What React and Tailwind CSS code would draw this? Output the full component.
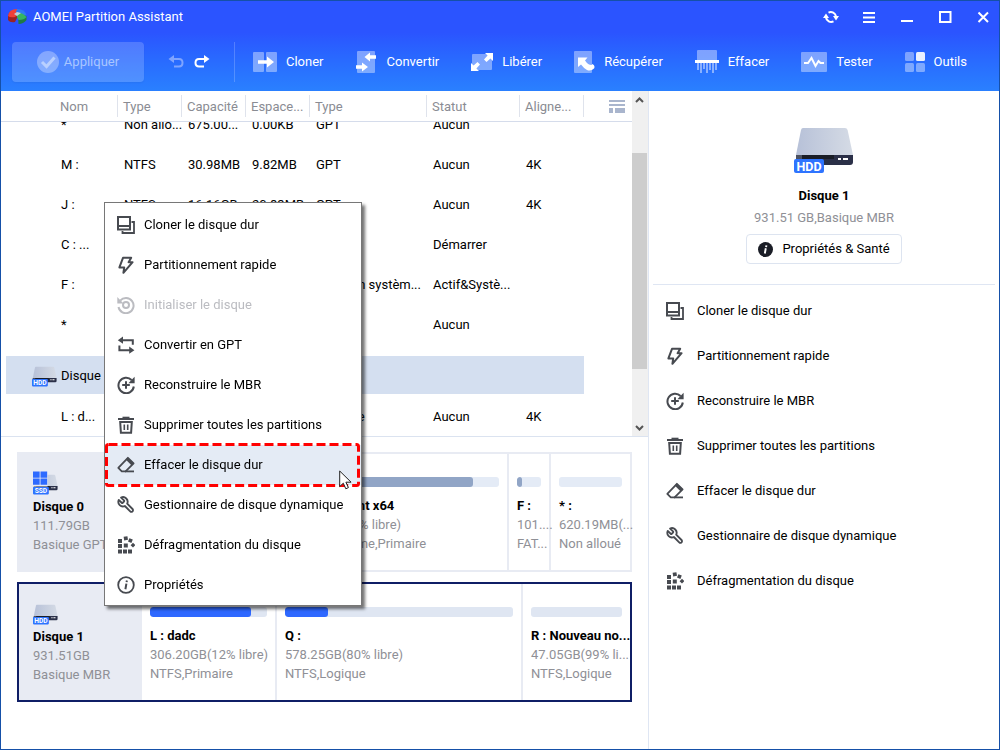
import React, { useEffect, useRef, useState } from 'react';

const columns = [
  { key: 'nom', label: 'Nom' },
  { key: 'fs', label: 'Type' },
  { key: 'capacite', label: 'Capacité' },
  { key: 'espace', label: 'Espace...' },
  { key: 'type', label: 'Type' },
  { key: 'statut', label: 'Statut' },
  { key: 'align', label: 'Aligne...' },
];

const rows = [
  { nom: '*', fs: 'Non allo...', capacite: '675.00...', espace: '0.00KB', type: 'GPT', statut: 'Aucun', align: '' },
  { nom: 'M :', fs: 'NTFS', capacite: '30.98MB', espace: '9.82MB', type: 'GPT', statut: 'Aucun', align: '4K' },
  { nom: 'J :', fs: 'NTFS', capacite: '16.16GB', espace: '20.83MB', type: 'GPT', statut: 'Aucun', align: '4K' },
  { nom: 'C : ...', fs: '', capacite: '', espace: '', type: '', statut: 'Démarrer', align: '' },
  { nom: 'F :', fs: '', capacite: '', espace: '', type: 'Partition systèm...', statut: 'Actif&Systè...', align: '' },
  { nom: '*', fs: '', capacite: '', espace: '', type: '', statut: 'Aucun', align: '' },
  { disk: true, nom: 'Disque 1' },
  { nom: 'L : d...', fs: '', capacite: '', espace: '', type: 'Primaire', statut: 'Aucun', align: '4K' },
];

const disks = [
  {
    name: 'Disque 0',
    size: '111.79GB',
    kind: 'Basique GPT',
    ssd: true,
    grid: 'grid-cols-[123px_minmax(0,133fr)_minmax(0,234fr)_minmax(0,42fr)_minmax(0,79fr)]',
    parts: [
      { name: '', info: '', fs: '', used: 40 },
      { name: 'C : Windows nt x64', info: '110.59GB(46% libre)', fs: 'FAT32, Système,Primaire', used: 88 },
      { name: 'F :', info: '101....', fs: 'FAT...', used: 22 },
      { name: '* :', info: '620.19MB(...', fs: 'Non alloué', used: 0 },
    ],
  },
  {
    name: 'Disque 1',
    size: '931.51GB',
    kind: 'Basique MBR',
    selected: true,
    grid: 'grid-cols-[123px_minmax(0,135fr)_minmax(0,246fr)_minmax(0,107fr)]',
    parts: [
      { name: 'L : dadc', info: '306.20GB(12% libre)', fs: 'NTFS,Primaire', used: 86 },
      { name: 'Q :', info: '578.25GB(80% libre)', fs: 'NTFS,Logique', used: 19 },
      { name: 'R : Nouveau no...', info: '47.05GB(99% li...', fs: 'NTFS,Logique', used: 0 },
    ],
  },
];

const menuItems = [
  { icon: 'clone', label: 'Cloner le disque dur' },
  { icon: 'bolt', label: 'Partitionnement rapide' },
  { icon: 'init', label: 'Initialiser le disque', disabled: true },
  { icon: 'convert', label: 'Convertir en GPT' },
  { icon: 'rebuild', label: 'Reconstruire le MBR' },
  { icon: 'trash', label: 'Supprimer toutes les partitions' },
  { icon: 'eraser', label: 'Effacer le disque dur', active: true },
  { icon: 'wrench', label: 'Gestionnaire de disque dynamique' },
  { icon: 'defrag', label: 'Défragmentation du disque' },
  { icon: 'info', label: 'Propriétés' },
];

const sideItems = menuItems.filter((m) => !['init', 'convert', 'info'].includes(m.icon));

const glyphs = {
  clone: (
    <g fill="none" stroke="currentColor" strokeWidth="2">
      <path d="M1 1h12v12.5H1zM1 10h12" />
      <path d="M14.5 6H17v11H5.5V15" strokeWidth="1.8" />
    </g>
  ),
  bolt: (
    <path d="M6 1.8h8.2L11.600 6.200h4L6.400 16.800l.8-5.400H2.400z" fill="none" stroke="currentColor" strokeWidth="2" strokeLinejoin="round" />
  ),
  init: (
    <g fill="none" stroke="currentColor" strokeWidth="2">
      <path d="M3.2 4.6A7.6 7.6 0 1 1 1.5 11" />
      <circle cx="9" cy="9" r="3" />
      <path d="M.3 1v6.4h6.2z" fill="currentColor" stroke="none" />
    </g>
  ),
  convert: (
    <g fill="none" stroke="currentColor" strokeWidth="2">
      <path d="M4 4.2h11.8v4.6M14 14.2H2.4V9.6" />
      <path d="M6 .6v7.2L.8 4.2zM12.2 10.6v7.2l5.2-3.6z" fill="currentColor" stroke="none" />
    </g>
  ),
  rebuild: (
    <g fill="none" stroke="currentColor" strokeWidth="2">
      <path d="M14.6 4A7.7 7.7 0 1 0 16.8 10.5" />
      <path d="M9 5.2v7.6M5.2 9h7.6" />
      <path d="M17.6.8v6.4h-6.2z" fill="currentColor" stroke="none" />
    </g>
  ),
  trash: (
    <g fill="none" stroke="currentColor" strokeWidth="2">
      <path d="M1 3h16" />
      <path d="M5.5 1.4h7" strokeWidth="1.4" />
      <path d="M3.2 6h11.6l-.7 10.8H3.9z" />
      <path d="M7.3 8.5v5.6M10.7 8.5v5.6" strokeWidth="1.6" />
    </g>
  ),
  eraser: (
    <g fill="none" stroke="currentColor" strokeWidth="1.8" strokeLinejoin="round">
      <path d="M10.9 1.8l5.7 5.6-8 8H4.8l-3.5-3.5z" />
      <path d="M8 15.4h9" />
      <path d="M10.9 1.4l6 6-2.2 2.2-6-6z" fill="currentColor" stroke="none" />
    </g>
  ),
  wrench: (
    <path
      transform="matrix(-.77 0 0 .77 18.3 -.4)"
      d="M14.7 6.3a1 1 0 0 0 0 1.4l1.6 1.6a1 1 0 0 0 1.4 0l3.77-3.77a6 6 0 0 1-7.94 7.94l-6.91 6.91a2.12 2.12 0 0 1-3-3l6.91-6.91a6 6 0 0 1 7.94-7.94l-3.76 3.76z"
      fill="none"
      stroke="currentColor"
      strokeWidth="2.4"
      strokeLinejoin="round"
    />
  ),
  defrag: (
    <g fill="currentColor">
      <path d="M1 3h4v4H1zM1 8h4v4H1zM1 13.4h4v4H1zM6 13.4h4v4H6zM11 13.4h4v4h-4zM6.8 7.6h4v4h-4z" />
      <path d="M6.6.8l3.8-.6.6 3.6-3.8.6zM12.4 2.2l3.4 1.4-1.4 3.4-3.4-1.4zM16 6.8l2.4 2.4-2.4 2.4-2.4-2.4z" />
    </g>
  ),
  info: (
    <g fill="none" stroke="currentColor" strokeWidth="1.8">
      <circle cx="9" cy="9" r="7.8" />
      <path d="M9.4 7.6l-1 5.6M9.9 4.5l-.3 1.7" strokeWidth="2" />
    </g>
  ),
};

const Icon = ({ name }) => (
  <svg className="h-[18px] w-[18px] shrink-0" viewBox="0 0 18 18" aria-hidden="true">
    {glyphs[name]}
  </svg>
);

const DriveIcon = ({ className, label = 'HDD', windows, small }) => (
  <svg className={className} viewBox="0 0 60 46" aria-hidden="true">
    <defs>
      <linearGradient id="drive" x1="0" y1="0" x2="1" y2="0">
        <stop offset="0" stopColor="#b7c1d8" />
        <stop offset="1" stopColor="#d5dbe5" />
      </linearGradient>
    </defs>
    <path d="M9 1h42q2 0 2.600 2L59 28H2L7 3q.5-2 2-2z" fill="url(#drive)" />
    <path d="M2 28h57v7q0 3-3 3H5q-3 0-3-3z" fill="#2b3048" />
    <path d="M2 28h6v4H2z" fill="#4c5160" />
    <path d="M8 28h32v4H8z" fill="#1a1d26" />
    <path d="M44 31h3v2h-3zM49 31h5v2h-5z" fill="#fff" />
    {windows && (
      <>
        <path d="M-1-8h36v37H-1z" fill="#e8ebf3" />
        <path d="M0-7h16v15H0zM18-7h16v15H18zM0 10h16v15H0zM18 10h16v15H18z" fill="#2e6bff" />
      </>
    )}
    {small ? (
      <rect x="0" y="30" width="38" height="18" rx="2" fill="#2e74ff" />
    ) : (
      <rect x="0" y="32" width="30" height="14" rx="2" fill="#2e74ff" />
    )}
    <text x={small ? 19 : 15} y={small ? 45 : 43.5} textAnchor="middle" fontSize={small ? 16 : 12.5} fontWeight="700" fill="#fff">
      {label}
    </text>
  </svg>
);

const Logo = () => (
  <svg className="h-[16px] w-[19px]" viewBox="0 0 19 16" aria-hidden="true">
    <path d="M9 1Q1 1 0 7v4q2 3 7 2l3-6z" fill="#9c2323" />
    <path d="M9 0Q1 0 0 7q2 2 7 1l3-3z" fill="#f04038" />
    <path d="M9 0q8 0 9.500 6L11 6 8 3z" fill="#2f7bf0" />
    <path d="M10 6l8.500 1v4q-3 4-8 4z" fill="#1f7a45" />
    <path d="M8 4q6-1 10.500 4-2 3-8 3L9 8z" fill="#36b560" />
    <path d="M6 5l3 2 4-3-4-1z" fill="#c4cdd8" />
  </svg>
);

const toolIcons = {
  cloner: (
    <svg className="h-6 w-6" viewBox="0 0 24 24" aria-hidden="true">
      <path d="M1 2h9q1 0 1 1v18q0 1-1 1H1q-1 0-1-1V3q0-1 1-1zM14 2h9q1 0 1 1v18q0 1-1 1h-9q-1 0-1-1V3q0-1 1-1z" fill="#fff" fillOpacity=".4" />
      <path d="M5 10.300h9V6.500l7 5.500-7 5.500v-3.800H5z" fill="#fff" />
    </svg>
  ),
  convertir: (
    <svg className="h-6 w-[22px]" viewBox="0 0 22 24" aria-hidden="true">
      <rect x="1" y="1" width="18" height="22" rx="1" fill="#fff" fillOpacity=".4" />
      <path d="M14 2.500v2.700h6v3.600h-6v2.700L8.500 7zM6 12.500v2.700H0v3.600h6v2.700l6-4.500z" fill="#fff" />
    </svg>
  ),
  liberer: (
    <svg className="h-6 w-[22px]" viewBox="0 0 22 24" aria-hidden="true">
      <rect x="1" y="4" width="20" height="16" rx="1" fill="#fff" fillOpacity=".4" />
      <path d="M14 3h8v8l-2.600-2.600L15.500 12 13 9.500l3.600-3.900zM8 21H0v-8l2.600 2.600L6.500 12 9 14.500l-3.600 3.900z" fill="#fff" />
    </svg>
  ),
  recuperer: (
    <svg className="h-6 w-[21px]" viewBox="0 0 21 24" aria-hidden="true">
      <rect x="0" y="1" width="18" height="22" rx="1" fill="#fff" fillOpacity=".4" />
      <path d="M4 7.500h9.500L11 10.500q3 4.500 6.500 4.500l1-1q3 1.500 1.500 4.500-3 3-7 1.500-3-1.500-6-5.500L4 17z" fill="#fff" />
    </svg>
  ),
  effacer: (
    <svg className="h-6 w-6" viewBox="0 0 24 24" aria-hidden="true">
      <path d="M3 0h18q1 0 1 1v9H2V1q0-1 1-1z" fill="#fff" fillOpacity=".4" />
      <path d="M0 10h24v3H0z" fill="#fff" />
      <path d="M3 13v7M6 13v10M9 13v6M12 13v10M15 13v7M18 13v10M21 13v7" stroke="#fff" strokeOpacity=".45" strokeWidth="2" />
    </svg>
  ),
  tester: (
    <svg className="h-6 w-[26px]" viewBox="0 0 26 24" aria-hidden="true">
      <rect y="2" width="26" height="20" rx="1" fill="#fff" fillOpacity=".4" />
      <path d="M3 13h4l3.500-5 4 8 3-5 2 2H23" fill="none" stroke="#fff" strokeWidth="2" />
    </svg>
  ),
  outils: (
    <svg className="h-6 w-[20px]" viewBox="0 0 20 24" aria-hidden="true">
      <g fill="#fff" fillOpacity=".4">
        <rect y="2" width="9" height="9" rx="1.500" />
        <rect y="13" width="9" height="9" rx="1.500" />
        <rect x="11" y="13" width="9" height="9" rx="1.500" />
      </g>
      <rect x="11" y="2" width="9" height="9" rx="1.500" fill="#fff" fillOpacity=".9" />
    </svg>
  ),
};

const tools = [
  { id: 'cloner', label: 'Cloner' },
  { id: 'convertir', label: 'Convertir' },
  { id: 'liberer', label: 'Libérer' },
  { id: 'recuperer', label: 'Récupérer' },
  { id: 'effacer', label: 'Effacer' },
  { id: 'tester', label: 'Tester' },
  { id: 'outils', label: 'Outils' },
];

const windowControls = [
  { label: 'Actualiser', d: 'M5.500 3.600A5.200 5.200 0 0 1 13 7.500M10.500 12.400A5.200 5.200 0 0 1 3 8.500', fill: 'M0 9l3-4.500L6 9zM10 7h6l-3 4.500z' },
  { label: 'Menu', d: 'M2 4h12M2 8.500h12M2 13h12' },
  { label: 'Réduire', d: 'M2 12h12' },
  { label: 'Agrandir', d: 'M3 3h10.500v10H3z' },
  { label: 'Fermer', d: 'M3.500 3.500l9.500 9.500M13 3.500L3.500 13' },
];

const Header = () => (
  <header className="bg-linear-to-b from-[#2b54ff] from-35% to-[#2a80ff] text-white">
    <div className="flex h-8 items-center justify-between pr-2 pl-[7px]">
      <div className="flex items-center gap-[6px]">
        <Logo />
        <h1>AOMEI Partition Assistant</h1>
      </div>
      <div className="flex gap-[22px]">
        {windowControls.map((c) => (
          <button key={c.label} type="button" aria-label={c.label} className="h-4 w-4">
            <svg viewBox="0 0 16 16" fill="none" stroke="#fff" strokeWidth="2">
              <path d={c.d} />
              {c.fill && <path d={c.fill} fill="#fff" stroke="none" />}
            </svg>
          </button>
        ))}
      </div>
    </div>
    <div className="flex h-[58px] items-center pr-8 pl-[11px]">
      <button type="button" className="flex h-10 w-[132px] items-center justify-center gap-[5px] rounded bg-white/18 text-[#a9c6ff] shadow-xs">
        <svg className="h-[22px] w-[22px]" viewBox="0 0 22 22" aria-hidden="true">
          <circle cx="11" cy="11" r="11" fill="#fff" fillOpacity=".3" />
          <path d="M5 11l4.500 4.500L17.500 6.500" fill="none" stroke="#b9d0ff" strokeWidth="3" />
        </svg>
        Appliquer
      </button>
      <div className="flex gap-[10px] pl-6">
        <button type="button" aria-label="Annuler" className="h-4 w-4">
          <svg viewBox="0 0 16 16" fill="none" stroke="#7fa4ff" strokeWidth="2">
            <path d="M4 5h7q3.500 0 3.500 3.700T11 12.500H6" />
            <path d="M6 1v8L.5 5z" fill="#7fa4ff" stroke="none" />
          </svg>
        </button>
        <button type="button" aria-label="Rétablir" className="h-4 w-4">
          <svg viewBox="0 0 16 16" fill="none" stroke="#fff" strokeWidth="2">
            <path d="M12 5H5Q1.500 5 1.500 8.700T5 12.500h5" />
            <path d="M10 1v8l5.500-4z" fill="#fff" stroke="none" />
          </svg>
        </button>
      </div>
      <div className="ml-6 h-10 border-l border-white/20" />
      <nav className="flex flex-1 items-center justify-between pl-[18px]">
        {tools.map((t) => (
          <button key={t.id} type="button" className="flex items-center gap-[9px]">
            {toolIcons[t.id]}
            {t.label}
          </button>
        ))}
      </nav>
    </div>
  </header>
);

const PartitionTable = () => {
  const scroller = useRef(null);

  useEffect(() => {
    scroller.current.scrollTop = 17;
  }, []);

  return (
    <section className="flex h-[346px] border-b border-[#dbe3f0]">
      <div ref={scroller} className="min-w-0 flex-1 overflow-hidden">
        <table className="w-full table-fixed border-separate border-spacing-0 text-left">
          <colgroup>
            <col className="w-[5px]" />
            <col className="w-[112px]" />
            <col className="w-[64px]" />
            <col className="w-[64px]" />
            <col className="w-[64px]" />
            <col className="w-[117px]" />
            <col className="w-[93px]" />
            <col className="w-[64px]" />
            <col />
          </colgroup>
          <thead className="sticky top-0 z-10 bg-white text-[#8a8c93]">
            <tr>
              <th className="border-b border-[#d5dceb]" />
              {columns.map((c) => (
                <th key={c.key} className="h-[31px] border-b border-[#d5dceb] p-0 font-normal">
                  <div className={`h-[22px] border-r border-[#dfe3ec] leading-6 ${c.key === 'nom' ? 'pl-[54px]' : 'pl-[5px]'}`}>
                    {c.label}
                  </div>
                </th>
              ))}
              <th className="border-b border-[#d5dceb] p-0 pl-[25px]">
                <button type="button" aria-label="Colonnes" className="block h-[13px] w-4">
                  <svg viewBox="0 0 16 13" fill="#a9b5cd">
                    <path d="M0 0h16v2H0zM0 4h16v2H0zM0 8h4v5H0zM6 8h10v5H6z" />
                  </svg>
                </button>
              </th>
            </tr>
          </thead>
          <tbody>
            {rows.map((r, i) =>
              r.disk ? (
                <React.Fragment key={i}>
                  <tr><td className="h-[11px] p-0" /></tr>
                  <tr>
                    <td className="p-0" />
                    <td colSpan={7} className="h-[38px] bg-[#d4dff0] p-0">
                      <div className="flex items-center gap-1 pt-[2px] pl-[26px]">
                        <DriveIcon small className="h-5 w-[25px] overflow-visible" />
                        {r.nom}
                      </div>
                    </td>
                    <td className="p-0" />
                  </tr>
                  <tr><td className="h-[3px] p-0" /></tr>
                </React.Fragment>
              ) : (
                <tr key={i}>
                  <td className="p-0" />
                  {columns.map((c) => (
                    <td
                      key={c.key}
                      className={`h-10 overflow-hidden p-0 whitespace-nowrap ${c.key === 'nom' ? 'pl-[55px]' : 'pl-[6px]'}`}
                    >
                      {r[c.key]}
                    </td>
                  ))}
                  <td className="p-0" />
                </tr>
              )
            )}
          </tbody>
        </table>
      </div>
      <div className="flex w-4 flex-col bg-[#f0f0f0] text-[#555]">
        <svg className="h-[17px] w-4" viewBox="0 0 16 17" fill="none" stroke="currentColor" strokeWidth="2">
          <path d="M4 11l3.500-3.500L11 11" />
        </svg>
        <div className="mt-[45px] h-[216px] w-[15px] bg-[#cdcdcd]" />
        <svg className="mt-auto h-[17px] w-4" viewBox="0 0 16 17" fill="none" stroke="currentColor" strokeWidth="2">
          <path d="M4 7l3.500 3.500L11 7" />
        </svg>
      </div>
    </section>
  );
};

const DiskCard = ({ disk }) => (
  <div className={`grid h-[120px] border-2 leading-[19px] ${disk.grid} ${disk.selected ? 'border-[#0f1e66]' : 'border-[#e8ebf3]'}`}>
    <div className="bg-[#e8ebf3] pt-5 pl-[14px] text-[#8f9096]">
      <DriveIcon small className="h-5 w-[25px] overflow-visible" label={disk.ssd ? 'SSD' : 'HDD'} windows={disk.ssd} />
      <p className="pt-[3px] font-bold text-black">{disk.name}</p>
      <p>{disk.size}</p>
      <p className="whitespace-nowrap">{disk.kind}</p>
    </div>
    {disk.parts.map((p) => (
      <div key={p.name} className="border-r-2 border-[#e8ebf3] pt-[23px] whitespace-nowrap text-[#8f9096] last:border-r-0">
        <div className={`mx-2 h-[10px] overflow-hidden rounded-[3px] ${disk.selected ? 'bg-[#dfe6f2]' : 'bg-[#e4ebf6]'}`}>
          <div
            className={`h-full rounded-[3px] ${disk.selected ? 'bg-[#2e68ff]' : 'bg-[#91a5c6]'}`}
            style={{ width: `${p.used}%` }}
          />
        </div>
        <div className="pt-[9px] pl-2">
          <p className="font-bold text-black">{p.name}</p>
          <p>{p.info}</p>
          <p>{p.fs}</p>
        </div>
      </div>
    ))}
  </div>
);

const Sidebar = () => (
  <aside className="w-[351px] shrink-0 border-l border-[#dfe6f3] pr-1 pl-1">
    <div className="flex flex-col items-center border-b border-[#dfe6f3] pt-9 pb-5">
      <DriveIcon className="h-[46px] w-[60px]" />
      <h2 className="pt-[13px] leading-5 font-bold">Disque 1</h2>
      <p className="pt-[2px] leading-5 text-[#8f9096]">931.51 GB,Basique MBR</p>
      <button type="button" className="mt-[6px] flex h-[30px] items-center gap-[9px] rounded border border-[#dde4f0] px-[11px]">
        <svg className="h-[15px] w-[15px]" viewBox="0 0 15 15" aria-hidden="true">
          <circle cx="7.500" cy="7.500" r="7.500" fill="#1a1d26" />
          <path d="M7.800 6.300l-1 5.200M8.400 3.400l-.3 1.700" stroke="#fff" strokeWidth="1.900" />
        </svg>
        Propriétés &amp; Santé
      </button>
    </div>
    <ul className="pt-[3px]">
      {sideItems.map((m) => (
        <li key={m.icon}>
          <button type="button" className="flex h-[45px] w-full items-center gap-[13px] pl-[13px] text-left">
            <span className="text-[#474a50]"><Icon name={m.icon} /></span>
            {m.label}
          </button>
        </li>
      ))}
    </ul>
  </aside>
);

const ContextMenu = () => {
  const [active, setActive] = useState('eraser');

  return (
    <div
      role="menu"
      className="absolute top-[201px] left-[103px] z-20 w-[258px] border border-[#777] bg-white pt-[2px] shadow-[3px_3px_3px_rgba(0,0,0,0.55)]"
    >
      {menuItems.map((m) => (
        <div key={m.icon} className="relative">
          <button
            type="button"
            role="menuitem"
            disabled={m.disabled}
            onMouseEnter={() => setActive(m.icon)}
            className={`flex h-10 w-full items-center gap-[9px] pl-3 text-left ${m.disabled ? 'text-[#bbbcc1]' : ''} ${
              active === m.icon ? 'bg-[#e4ebf5]' : ''
            }`}
          >
            <span className={m.disabled ? 'text-[#bbbcc1]' : 'text-[#474a50]'}><Icon name={m.icon} /></span>
            {m.label}
          </button>
          {m.active && (
            <>
              {/* tutorial highlight and mouse pointer */}
              <svg className="pointer-events-none absolute -top-[2px] left-0 h-11 w-full" aria-hidden="true">
                <rect x="1.500" y="1.500" width="252" height="41" rx="2" fill="none" stroke="#f00" strokeWidth="3" strokeDasharray="9 4" />
              </svg>
              <svg className="pointer-events-none absolute top-[25px] right-[9px] h-[20px] w-[13px]" viewBox="0 0 13 20" aria-hidden="true">
                <path d="M.7 1v15.500l3.600-3.300 2.500 5.600 2.600-1.200-2.500-5.400h5.200z" fill="#fff" stroke="#222" />
              </svg>
            </>
          )}
        </div>
      ))}
    </div>
  );
};

export default function App() {
  return (
    <div className="relative flex min-h-screen flex-col border border-[#1550a8] bg-white font-['Roboto','Liberation_Sans',sans-serif] text-[13px] leading-5 text-black">
      <Header />
      <main className="flex flex-1">
        <div className="min-w-0 flex-1">
          <PartitionTable />
          <section className="flex flex-col gap-[10px] py-[15px] pr-4 pl-4">
            {disks.map((d) => (
              <DiskCard key={d.name} disk={d} />
            ))}
          </section>
        </div>
        <Sidebar />
      </main>
      <ContextMenu />
    </div>
  );
}
